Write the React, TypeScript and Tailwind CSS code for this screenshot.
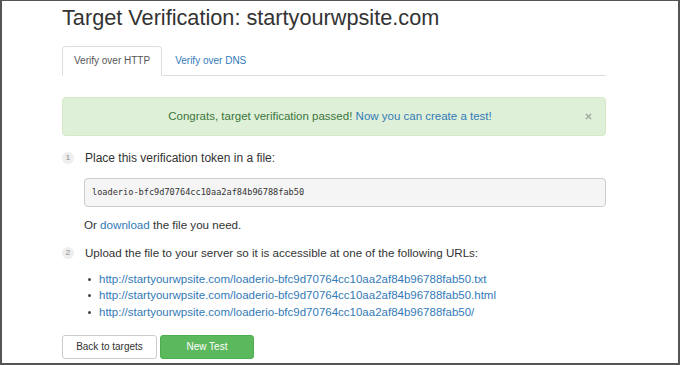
import { X } from 'lucide-react';

const token = 'loaderio-bfc9d70764cc10aa2af84b96788fab50';
const baseUrl = `http://startyourwpsite.com/${token}`;
const urls = [`${baseUrl}.txt`, `${baseUrl}.html`, `${baseUrl}/`];

function StepBadge({ n }: { n: number }) {
  return (
    <span className="w-[12px] h-[12px] rounded-full bg-[#eeeeee] text-[#888] text-[8px] leading-[12px] text-center shrink-0">
      {n}
    </span>
  );
}

export default function App() {
  return (
    <div
      className="w-[680px] h-[365px] overflow-hidden bg-white border-t border-l-2 border-r-2 border-b-2 border-[#555] text-[#333]"
      style={{ fontFamily: '"Liberation Sans", Arial, sans-serif' }}
    >
      <div className="ml-[60px] w-[544px]">
        <h1 className="mt-[4px] text-[21.7px] leading-[26px] font-normal">
          Target Verification: startyourwpsite.com
        </h1>

        {/* tabs */}
        <div className="mt-[15px] flex border-b border-[#dddddd] h-[30px]">
          <div className="h-[30px] px-[11px] border border-[#dddddd] border-b-white rounded-t-[4px] bg-white text-[10px] leading-[28px] text-[#555]">
            Verify over HTTP
          </div>
          <div className="h-[30px] px-[13px] text-[10px] leading-[30px] text-[#337ab7]">
            Verify over DNS
          </div>
        </div>

        {/* alert */}
        <div className="mt-[21px] h-[39px] relative rounded-[4px] border border-[#d6e9c6] bg-[#dff0d8] pr-[8px] text-[#3c763d] text-[11.5px] leading-[37px] text-center">
          Congrats, target verification passed!{' '}
          <a className="text-[#337ab7]">Now you can create a test!</a>
          <X className="absolute right-[12px] top-[14px] w-[9px] h-[9px] text-[#a2ad9f]" strokeWidth={4} />
        </div>

        {/* step 1 */}
        <div className="mt-[14px] flex items-center gap-[11px] h-[16px]">
          <StepBadge n={1} />
          <span className="text-[12px] leading-[16px]">Place this verification token in a file:</span>
        </div>
        <div
          className="ml-[22px] mt-[12px] h-[29px] rounded-[4px] border border-[#cccccc] bg-[#f5f5f5] px-[7px] text-[8.6px] leading-[27px] text-[#333]"
          style={{ fontFamily: '"DejaVu Sans Mono", "Liberation Mono", monospace' }}
        >
          {token}
        </div>
        <p className="ml-[22px] mt-[10px] text-[11.6px] leading-[16px]">
          Or <a className="text-[#337ab7]">download</a> the file you need.
        </p>

        {/* step 2 */}
        <div className="mt-[12px] flex items-center gap-[11px] h-[16px]">
          <StepBadge n={2} />
          <span className="text-[11.6px] leading-[16px]">
            Upload the file to your server so it is accessible at one of the following URLs:
          </span>
        </div>
        <ul className="mt-[10px] ml-[26px]">
          {urls.map((u) => (
            <li key={u} className="flex items-center h-[16.5px] text-[11.5px]">
              <span className="w-[3px] h-[3px] rounded-full bg-[#444] mr-[8px]" />
              <a className="text-[#337ab7]">{u}</a>
            </li>
          ))}
        </ul>

        {/* buttons */}
        <div className="mt-[14px] flex gap-[3px]">
          <button className="w-[95px] h-[24px] rounded-[3px] border border-[#cccccc] bg-white text-[10px] text-[#333]">
            Back to targets
          </button>
          <button className="w-[94px] h-[24px] rounded-[3px] border border-[#4cae4c] bg-[#5cb85c] text-[10px] text-white">
            New Test
          </button>
        </div>
      </div>
    </div>
  );
}
